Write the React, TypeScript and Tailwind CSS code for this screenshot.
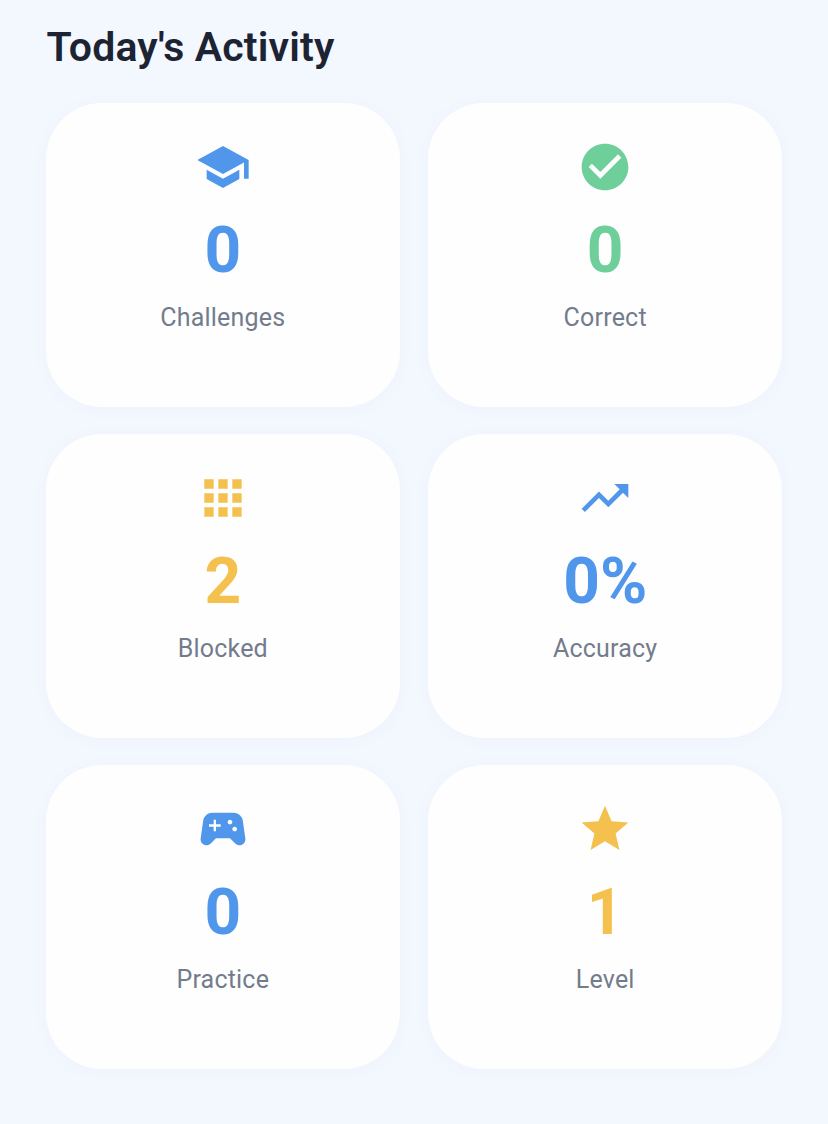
import { IconType } from "react-icons";
import {
  MdApps,
  MdCheckCircle,
  MdSchool,
  MdSportsEsports,
  MdStar,
  MdTrendingUp,
} from "react-icons/md";

const BLUE = "text-[#5097ec]";
const GREEN = "text-[#6fcf9b]";
const YELLOW = "text-[#f4c04e]";

const STATS: { icon: IconType; value: string; label: string; color: string }[] = [
  { icon: MdSchool, value: "0", label: "Challenges", color: BLUE },
  { icon: MdCheckCircle, value: "0", label: "Correct", color: GREEN },
  { icon: MdApps, value: "2", label: "Blocked", color: YELLOW },
  { icon: MdTrendingUp, value: "0%", label: "Accuracy", color: BLUE },
  { icon: MdSportsEsports, value: "0", label: "Practice", color: BLUE },
  { icon: MdStar, value: "1", label: "Level", color: YELLOW },
];

const StatCard = ({ icon: Icon, value, label, color }: (typeof STATS)[number]) => (
  <div className="flex h-[304px] flex-col items-center rounded-[56px] bg-[#fefeff] pt-[36px] shadow-[0_2px_16px_rgba(120,150,200,0.04)]">
    <Icon size={56} className={color} />
    <div className={`mt-[17px] text-[64px] leading-[78px] font-bold ${color}`}>{value}</div>
    <div className="mt-[12px] text-[25px] leading-[32px] tracking-[0.2px] text-[#737c8c]">{label}</div>
  </div>
);

export default function App() {
  return (
    <div className="min-h-[1124px] bg-[#f3f7fe] px-[45.6px] pt-[22px] font-['Roboto',sans-serif]">
      <h1 className="ml-[1px] text-[41px] leading-[50px] font-semibold tracking-[0.15px] text-[#1c2433]">
        Today's Activity
      </h1>
      <div className="mt-[31px] grid grid-cols-2 gap-x-[28px] gap-y-[27px]">
        {STATS.map((stat) => (
          <StatCard key={stat.label} {...stat} />
        ))}
      </div>
    </div>
  );
}
